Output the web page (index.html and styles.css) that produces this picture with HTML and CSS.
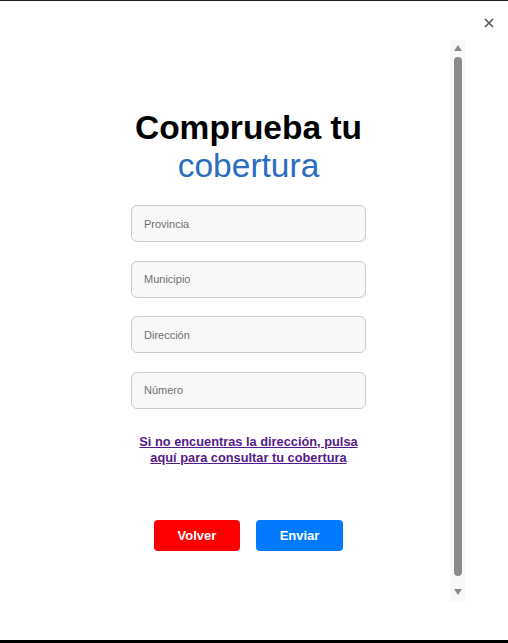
FILE: index.html
```html
<!DOCTYPE html>
<html lang="es">
<head>
<meta charset="utf-8">
<title>Comprueba tu cobertura</title>
<link rel="stylesheet" href="styles.css">
</head>
<body>
<div class="modal">
  <button class="close" aria-label="Cerrar">
    <svg width="10" height="10" viewBox="0 0 10 10"><path d="M1 1L9 9M9 1L1 9" stroke="#555" stroke-width="1.6" fill="none"/></svg>
  </button>
  <div class="scrollbar">
    <span class="arrow up"></span>
    <span class="thumb"></span>
    <span class="arrow down"></span>
  </div>
  <main class="content">
    <h1 class="title">Comprueba tu<br><span class="accent">cobertura</span></h1>
    <form class="form">
      <input class="field" type="text" placeholder="Provincia">
      <input class="field" type="text" placeholder="Municipio">
      <input class="field" type="text" placeholder="Dirección">
      <input class="field" type="text" placeholder="Número">
    </form>
    <a class="link" href="#">Si no encuentras la dirección, pulsa<br>aquí para consultar tu cobertura</a>
    <div class="actions">
      <button class="btn btn-back" type="button">Volver</button>
      <button class="btn btn-send" type="button">Enviar</button>
    </div>
  </main>
</div>
</body>
</html>
```
FILE: styles.css
```css
* { box-sizing: border-box; }
html, body { margin: 0; padding: 0; background: #fff; }
body { font-family: "Liberation Sans", Arial, sans-serif; }

.modal {
  position: relative;
  width: 508px;
  height: 643px;
  border-top: 1px solid #222;
  border-bottom: 3px solid #000;
  background: #fff;
  overflow: hidden;
}

.close {
  position: absolute;
  top: 16px;
  left: 483px;
  width: 12px;
  height: 12px;
  padding: 0;
  border: 0;
  background: transparent;
  display: flex;
  align-items: center;
  justify-content: center;
}

.scrollbar {
  position: absolute;
  top: 39px;
  left: 450px;
  width: 15px;
  height: 562px;
  background: #f8f8f8;
  display: flex;
  flex-direction: column;
  align-items: center;
  padding: 5px 0 7px;
}
.arrow { width: 0; height: 0; border-left: 4px solid transparent; border-right: 4px solid transparent; }
.arrow.up { border-bottom: 6px solid #888; margin-bottom: 6px; }
.arrow.down { border-top: 6px solid #888; margin-top: 13px; }
.thumb { flex: 1; width: 8px; border-radius: 4px; background: #8a8a8a; }

.content {
  width: 497px;
  display: flex;
  flex-direction: column;
  align-items: center;
  padding-top: 108px;
}

.title {
  margin: 0;
  font-size: 33.5px;
  font-weight: 700;
  line-height: 38px;
  color: #000;
  text-align: center;
}
.accent { font-weight: 400; color: #2b6cbf; }

.form {
  margin-top: 20px;
  display: flex;
  flex-direction: column;
  gap: 18.4px;
}
.field {
  width: 235px;
  height: 37.2px;
  border: 1px solid #cbcbcb;
  border-radius: 6px;
  background: #f8f8f8;
  padding: 0 12px;
  font-family: inherit;
  font-size: 11px;
  color: #333;
}
.field::placeholder { color: #6f6f6f; }

.link {
  margin-top: 25px;
  font-size: 12.8px;
  font-weight: 700;
  line-height: 16px;
  color: #551a8b;
  text-align: center;
  text-decoration: underline;
}

.actions {
  margin-top: 54px;
  display: flex;
  gap: 16px;
}
.btn {
  width: 86px;
  height: 31px;
  border: 0;
  border-radius: 4px;
  color: #fff;
  font-family: inherit;
  font-size: 13px;
  font-weight: 700;
}
.btn-back { background: #ff0000; }
.btn-send { background: #007bff; width: 87px; }
```
